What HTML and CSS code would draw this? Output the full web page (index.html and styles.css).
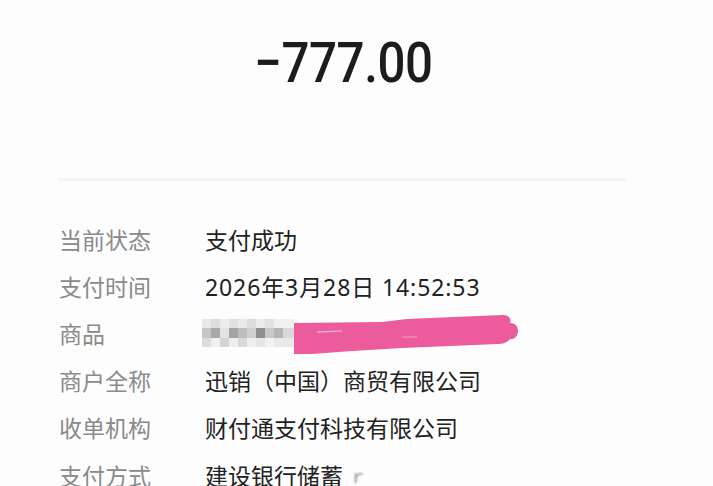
FILE: index.html
```html
<!DOCTYPE html>
<html lang="zh-CN">
<head>
    <meta charset="UTF-8">
    <meta name="viewport" content="width=device-width, initial-scale=1.0">
    <title>账单详情</title>
    <link rel="stylesheet" href="styles.css">
</head>
<body>
    <div class="top">
        <span class="amount">−777.00</span>
    </div>
    <div class="divider"></div>
    <div class="details">
        <div class="label">当前状态</div>
        <div class="value">支付成功</div>
        <div class="label">支付时间</div>
        <div class="value date">2026年3月28日 14:52:53</div>
        <div class="label">商品</div>
        <div class="value">
            <svg class="redact" width="320" height="42" viewBox="0 0 320 42">
                <rect x="0" y="6" width="9" height="9" fill="#e9e9e9"/>
                <rect x="9" y="6" width="9" height="9" fill="#dedede"/>
                <rect x="18" y="6" width="9" height="9" fill="#ececec"/>
                <rect x="27" y="6" width="9" height="9" fill="#e0e0e0"/>
                <rect x="36" y="6" width="9" height="9" fill="#eaeaea"/>
                <rect x="45" y="6" width="9" height="9" fill="#dcdcdc"/>
                <rect x="54" y="6" width="9" height="9" fill="#ebebeb"/>
                <rect x="63" y="6" width="9" height="9" fill="#e2e2e2"/>
                <rect x="72" y="6" width="20" height="9" fill="#f0f0f0"/>
                <rect x="0" y="15" width="9" height="10" fill="#c6c6c6"/>
                <rect x="9" y="15" width="9" height="10" fill="#a9a9a9"/>
                <rect x="18" y="15" width="9" height="10" fill="#e3e3e3"/>
                <rect x="27" y="15" width="9" height="10" fill="#a3a3a3"/>
                <rect x="36" y="15" width="9" height="10" fill="#bdbdbd"/>
                <rect x="45" y="15" width="9" height="10" fill="#cfcfcf"/>
                <rect x="54" y="15" width="9" height="10" fill="#8f8f8f"/>
                <rect x="63" y="15" width="9" height="10" fill="#c9c9c9"/>
                <rect x="72" y="15" width="9" height="10" fill="#b5b5b5"/>
                <rect x="81" y="15" width="11" height="10" fill="#d9d9d9"/>
                <rect x="0" y="25" width="9" height="9" fill="#dcdcdc"/>
                <rect x="9" y="25" width="9" height="9" fill="#f1f1f1"/>
                <rect x="18" y="25" width="9" height="9" fill="#d4d4d4"/>
                <rect x="27" y="25" width="9" height="9" fill="#eeeeee"/>
                <rect x="36" y="25" width="9" height="9" fill="#d8d8d8"/>
                <rect x="45" y="25" width="9" height="9" fill="#efefef"/>
                <rect x="54" y="25" width="9" height="9" fill="#e6e6e6"/>
                <rect x="63" y="25" width="9" height="9" fill="#f2f2f2"/>
                <rect x="72" y="25" width="20" height="9" fill="#e9e9e9"/>
                <path d="M92 10 L180 9 L205 6 L300 2 C308 2 309 6 308 10 C314 10 316 14 316 18 C316 23 312 27 308 26 C305 30 300 31 296 31 L200 35 L150 38 L110 41 L92 41 Z" fill="#ec5b9b"/>
                <path d="M115 19 L140 18" stroke="#f4a6c8" stroke-width="1.5"/>
                <path d="M200 24 L215 24" stroke="#f08bb7" stroke-width="1.5"/>
            </svg>
        </div>
        <div class="label">商户全称</div>
        <div class="value">迅销（中国）商贸有限公司</div>
        <div class="label">收单机构</div>
        <div class="value">财付通支付科技有限公司</div>
        <div class="label">支付方式</div>
        <div class="value">建设银行储蓄 <span class="blur">ｒ</span></div>
    </div>
</body>
</html>
```

FILE: styles.css
```css
html, body {
    margin: 0;
    padding: 0;
    background-color: #fdfdfd;
    font-family: "Noto Sans", "Noto Sans CJK SC", sans-serif;
    overflow: hidden;
    height: 100vh;
}
.top {
    margin-top: 31px;
    text-align: center;
    padding-right: 26px;
    height: 64px;
}
.amount {
    display: inline-block;
    font-family: Roboto, "Noto Sans", sans-serif;
    font-size: 56px;
    font-weight: 500;
    letter-spacing: -0.5px;
    line-height: 64px;
    color: #1c1c1c;
    transform: scaleX(0.88);
}
.divider {
    margin: 83px 86px 0 58px;
    height: 3px;
    border-radius: 2px;
    background: #f4f4f4;
}
.details {
    display: grid;
    grid-template-columns: 146px auto;
    grid-auto-rows: 47.2px;
    padding-left: 59px;
    margin-top: 34px;
    font-size: 23px;
}
.label, .value {
    display: flex;
    align-items: center;
    white-space: pre;
}
.label {
    color: #8a8a8a;
}
.value {
    color: #222;
}
.date {
    letter-spacing: 0.9px;
}
.redact {
    display: block;
    margin-left: -3px;
    margin-top: 2px;
}
.blur {
    color: #888;
    font-size: 18px;
    filter: blur(0.8px);
}
```
